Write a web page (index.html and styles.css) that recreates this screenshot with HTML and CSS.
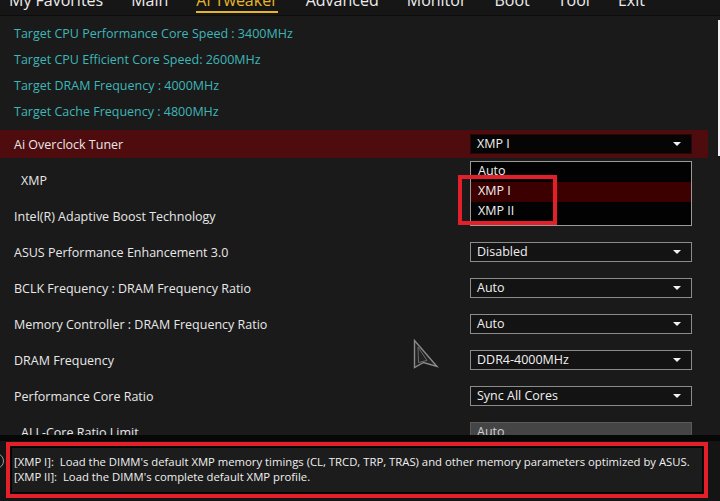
FILE: index.html
```html
<!DOCTYPE html>
<html>
<head>
<meta charset="utf-8">
<link rel="stylesheet" href="styles.css">
</head>
<body>
<div class="screen">
  <nav class="menubar">
    <span class="tab">My Favorites</span>
    <span class="tab">Main</span>
    <span class="tab active">Ai Tweaker</span>
    <span class="tab">Advanced</span>
    <span class="tab">Monitor</span>
    <span class="tab">Boot</span>
    <span class="tab">Tool</span>
    <span class="tab">Exit</span>
  </nav>
  <div class="body">
    <main class="content">
      <div class="info">Target CPU Performance Core Speed : 3400MHz</div>
      <div class="info">Target CPU Efficient Core Speed: 2600MHz</div>
      <div class="info">Target DRAM Frequency : 4000MHz</div>
      <div class="info">Target Cache Frequency : 4800MHz</div>

      <div class="row selected">
        <div class="row-inner">
          <span class="label">Ai Overclock Tuner</span>
          <span class="select dark">XMP I<i class="arrow"></i></span>
        </div>
      </div>
      <div class="row">
        <div class="row-inner"><span class="label sub">XMP</span></div>
      </div>
      <div class="row">
        <div class="row-inner">
          <span class="label">Intel(R) Adaptive Boost Technology</span>
          <span class="select"></span>
        </div>
      </div>
      <div class="row">
        <div class="row-inner">
          <span class="label">ASUS Performance Enhancement 3.0</span>
          <span class="select">Disabled<i class="arrow"></i></span>
        </div>
      </div>
      <div class="row">
        <div class="row-inner">
          <span class="label">BCLK Frequency : DRAM Frequency Ratio</span>
          <span class="select">Auto<i class="arrow"></i></span>
        </div>
      </div>
      <div class="row">
        <div class="row-inner">
          <span class="label">Memory Controller : DRAM Frequency Ratio</span>
          <span class="select">Auto<i class="arrow"></i></span>
        </div>
      </div>
      <div class="row">
        <div class="row-inner">
          <span class="label">DRAM Frequency</span>
          <span class="select">DDR4-4000MHz<i class="arrow"></i></span>
        </div>
      </div>
      <div class="row">
        <div class="row-inner">
          <span class="label">Performance Core Ratio</span>
          <span class="select">Sync All Cores<i class="arrow"></i></span>
        </div>
      </div>
      <div class="row">
        <div class="row-inner">
          <span class="label sub">ALL-Core Ratio Limit</span>
          <span class="select gray">Auto</span>
        </div>
      </div>

      <ul class="droplist">
        <li>Auto</li>
        <li class="hl">XMP I</li>
        <li>XMP II</li>
      </ul>
      <div class="mark"></div>
      <svg class="cursor" width="26" height="30" viewBox="0 0 26 30">
        <path d="M1.5 1.5 L24 27.5 L10.5 23.5 L1.5 28.5 Z" fill="#222" stroke="#8a8a8a" stroke-width="1.4" stroke-linejoin="miter"/>
        <path d="M5 8 L14 21.5 L5.5 23.5 Z" fill="none" stroke="#6a6a6a" stroke-width="1"/>
      </svg>
    </main>
    <div class="scroll"><div class="thumb"></div></div>
  </div>
  <footer class="help">
    <span class="knob"></span>
    <div class="help-box">
      <p>[XMP I]:&nbsp; Load the DIMM's default XMP memory timings (CL, TRCD, TRP, TRAS) and other memory parameters optimized by ASUS.</p>
      <p>[XMP II]:&nbsp; Load the DIMM's complete default XMP profile.</p>
    </div>
  </footer>
</div>
</body>
</html>
```
FILE: styles.css
```css
* { box-sizing: border-box; margin: 0; padding: 0; }
html, body { width: 720px; height: 501px; overflow: hidden; background: #1a1a1a; }
body { font-family: "Open Sans", "DejaVu Sans", sans-serif; color: #e6e6e6; }

.screen { display: flex; flex-direction: column; width: 720px; height: 501px; }

.menubar {
  height: 16px;
  flex: none;
  display: flex;
  gap: 28px;
  padding-left: 9px;
  background: #161616;
  border-bottom: 1px solid #0c0c0c;
  overflow: hidden;
  font-size: 16px;
  line-height: 20px;
  color: #ececec;
}
.tab { margin-top: -10px; height: 24px; }
.tab.active {
  color: #e5b52a;
  border-bottom: 2px solid #e5b52a;
  height: 23px;
}

.body { display: flex; height: 419px; flex: none; }
.content {
  position: relative;
  flex: 1;
  padding-top: 5px;
  overflow: hidden;
  background: #1a1a1a;
}
.scroll { width: 2px; padding-top: 4px; }
.thumb { width: 2px; height: 136px; background: #f2f2f2; }

.info {
  height: 26px;
  line-height: 26px;
  padding-left: 14px;
  font-size: 12.5px;
  color: #3eb6b8;
}

.row { height: 36px; padding: 4px 0; margin-right: 10px; }
.info + .row { margin-top: 1px; }
.row-inner {
  height: 28px;
  display: flex;
  align-items: center;
  padding-left: 14px;
  padding-right: 16px;
}
.row.selected .row-inner { background: #4e0c0e; }
.label { flex: 1; font-size: 12.5px; color: #e8e8e8; }
.label.sub { padding-left: 7px; }

.select {
  position: relative;
  width: 222px;
  height: 20px;
  border: 1px solid #8c8c8c;
  background: #131313;
  font-size: 12.5px;
  line-height: 18px;
  padding-left: 6px;
  color: #f0f0f0;
}
.select.dark { background: #050505; border-color: #2c0606; }
.select.gray { background: #454545; border-color: #5a5a5a; color: #cfcfcf; }
.arrow {
  position: absolute;
  right: 10px;
  top: 7px;
  width: 0; height: 0;
  border-left: 4px solid transparent;
  border-right: 4px solid transparent;
  border-top: 4px solid #f2f2f2;
}

.droplist {
  position: absolute;
  left: 470px;
  top: 145px;
  width: 222px;
  height: 65px;
  list-style: none;
  background: #020202;
  border: 1px solid #9a9a9a;
  font-size: 12.5px;
}
.droplist li { height: 20px; line-height: 18px; padding-left: 7px; color: #f0f0f0; }
.droplist li.hl { background: #3c0000; }

.mark {
  position: absolute;
  left: 458px;
  top: 159px;
  width: 99px;
  height: 50px;
  border: 4px solid #e3202a;
}

.cursor { position: absolute; left: 413px; top: 323px; }

.help {
  position: relative;
  flex: 1;
  background: #141414;
  border-top: 6px solid #070707;
  padding: 1px 12px 3px 6px;
}
.knob {
  position: absolute;
  left: -12px;
  top: 12px;
  width: 16px;
  height: 16px;
  border-radius: 50%;
  border: 1px solid #9a9a9a;
}
.help-box {
  height: 56px;
  border: 4px solid #e3202a;
  background: #1c1c1c;
  box-shadow: inset 0 0 0 2px #050505;
  padding: 8px 0 0 4px;
  font-size: 11.3px;
  line-height: 15px;
  color: #f0f0f0;
}
```
